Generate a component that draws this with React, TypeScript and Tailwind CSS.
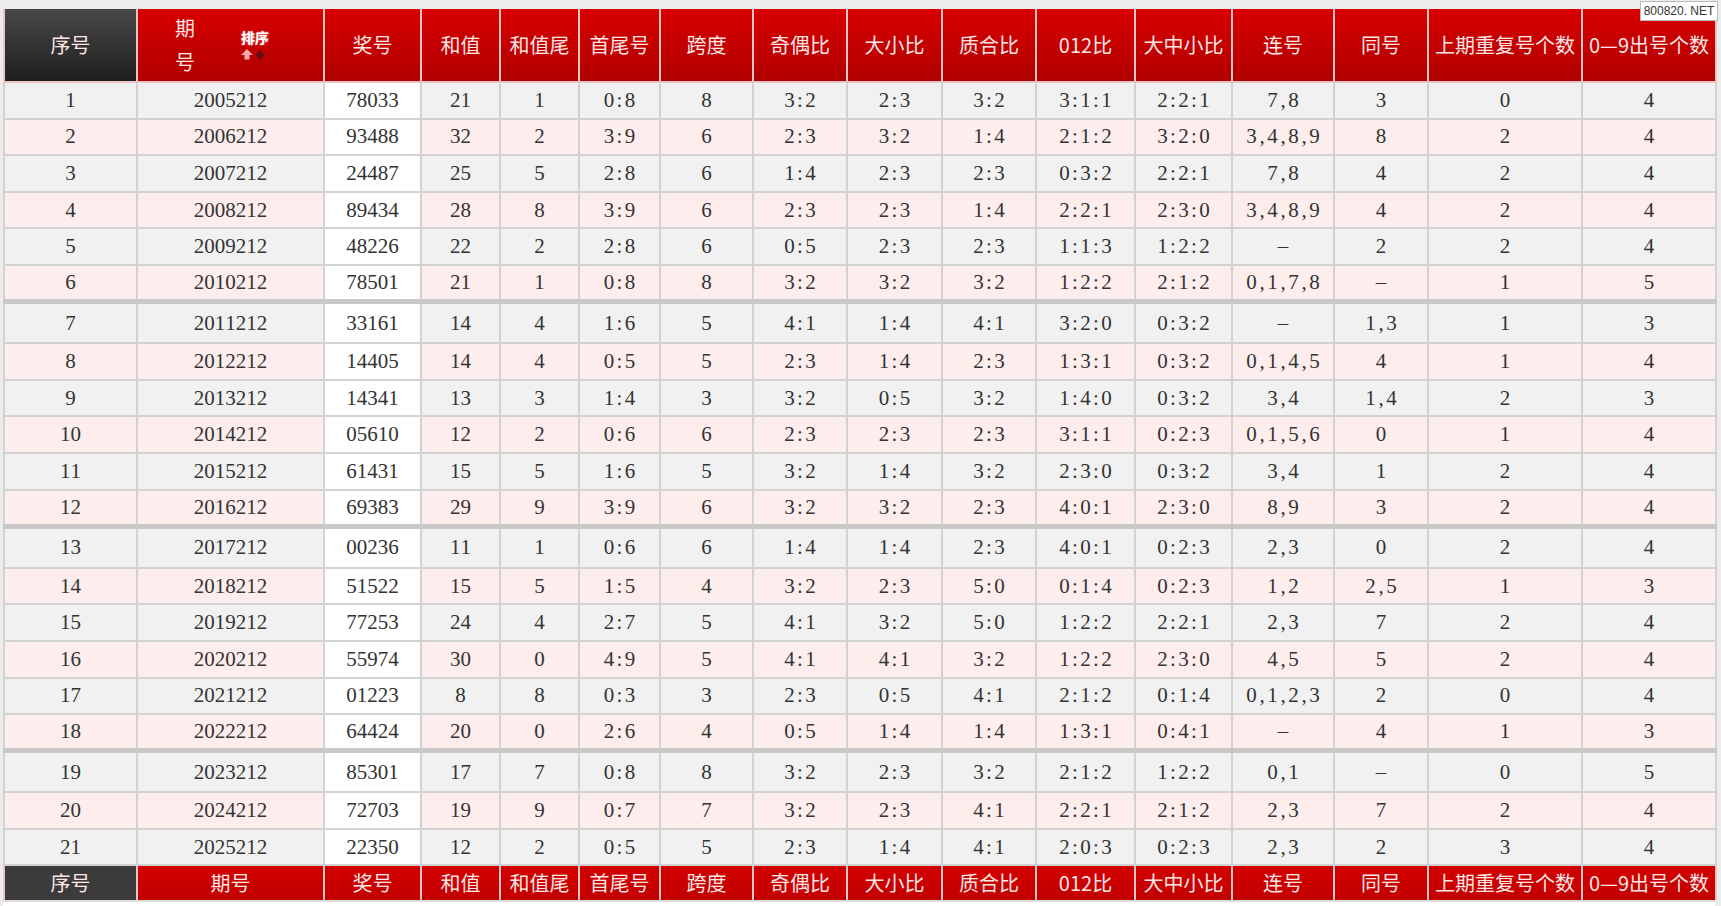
import React from 'react';

type Row = string[];

const widths = [133, 187, 97, 79, 79, 81, 93, 94, 95, 94, 99, 97, 102, 94, 154, 134];

const heads = [
  '序号', '期号', '奖号', '和值', '和值尾', '首尾号', '跨度', '奇偶比', '大小比',
  '质合比', '012比', '大中小比', '连号', '同号', '上期重复号个数', '0—9出号个数',
];

const rows: Row[] = [
  ['1', '2005212', '78033', '21', '1', '0:8', '8', '3:2', '2:3', '3:2', '3:1:1', '2:2:1', '7,8', '3', '0', '4'],
  ['2', '2006212', '93488', '32', '2', '3:9', '6', '2:3', '3:2', '1:4', '2:1:2', '3:2:0', '3,4,8,9', '8', '2', '4'],
  ['3', '2007212', '24487', '25', '5', '2:8', '6', '1:4', '2:3', '2:3', '0:3:2', '2:2:1', '7,8', '4', '2', '4'],
  ['4', '2008212', '89434', '28', '8', '3:9', '6', '2:3', '2:3', '1:4', '2:2:1', '2:3:0', '3,4,8,9', '4', '2', '4'],
  ['5', '2009212', '48226', '22', '2', '2:8', '6', '0:5', '2:3', '2:3', '1:1:3', '1:2:2', '–', '2', '2', '4'],
  ['6', '2010212', '78501', '21', '1', '0:8', '8', '3:2', '3:2', '3:2', '1:2:2', '2:1:2', '0,1,7,8', '–', '1', '5'],
  ['7', '2011212', '33161', '14', '4', '1:6', '5', '4:1', '1:4', '4:1', '3:2:0', '0:3:2', '–', '1,3', '1', '3'],
  ['8', '2012212', '14405', '14', '4', '0:5', '5', '2:3', '1:4', '2:3', '1:3:1', '0:3:2', '0,1,4,5', '4', '1', '4'],
  ['9', '2013212', '14341', '13', '3', '1:4', '3', '3:2', '0:5', '3:2', '1:4:0', '0:3:2', '3,4', '1,4', '2', '3'],
  ['10', '2014212', '05610', '12', '2', '0:6', '6', '2:3', '2:3', '2:3', '3:1:1', '0:2:3', '0,1,5,6', '0', '1', '4'],
  ['11', '2015212', '61431', '15', '5', '1:6', '5', '3:2', '1:4', '3:2', '2:3:0', '0:3:2', '3,4', '1', '2', '4'],
  ['12', '2016212', '69383', '29', '9', '3:9', '6', '3:2', '3:2', '2:3', '4:0:1', '2:3:0', '8,9', '3', '2', '4'],
  ['13', '2017212', '00236', '11', '1', '0:6', '6', '1:4', '1:4', '2:3', '4:0:1', '0:2:3', '2,3', '0', '2', '4'],
  ['14', '2018212', '51522', '15', '5', '1:5', '4', '3:2', '2:3', '5:0', '0:1:4', '0:2:3', '1,2', '2,5', '1', '3'],
  ['15', '2019212', '77253', '24', '4', '2:7', '5', '4:1', '3:2', '5:0', '1:2:2', '2:2:1', '2,3', '7', '2', '4'],
  ['16', '2020212', '55974', '30', '0', '4:9', '5', '4:1', '4:1', '3:2', '1:2:2', '2:3:0', '4,5', '5', '2', '4'],
  ['17', '2021212', '01223', '8', '8', '0:3', '3', '2:3', '0:5', '4:1', '2:1:2', '0:1:4', '0,1,2,3', '2', '0', '4'],
  ['18', '2022212', '64424', '20', '0', '2:6', '4', '0:5', '1:4', '1:4', '1:3:1', '0:4:1', '–', '4', '1', '3'],
  ['19', '2023212', '85301', '17', '7', '0:8', '8', '3:2', '2:3', '3:2', '2:1:2', '1:2:2', '0,1', '–', '0', '5'],
  ['20', '2024212', '72703', '19', '9', '0:7', '7', '3:2', '2:3', '4:1', '2:2:1', '2:1:2', '2,3', '7', '2', '4'],
  ['21', '2025212', '22350', '12', '2', '0:5', '5', '2:3', '1:4', '4:1', '2:0:3', '0:2:3', '2,3', '2', '3', '4'],
];

// every character gets the same half-em box, like the old song-style font
function Mono({ text }: { text: string }) {
  return (
    <span className="inline-flex justify-center">
      {[...text].map((c, i) => (
        <span key={i} className="inline-block w-[10.5px] text-center">{c}</span>
      ))}
    </span>
  );
}

function SortIcon() {
  return (
    <div className="flex flex-col items-start">
      <span className="text-[14px] font-bold leading-[15px] text-white [text-shadow:0_0_2px_#f7b0b0]">排序</span>
      <svg width="28" height="11" viewBox="0 0 28 11" className="mt-[4px]">
        <path d="M6 0 L12 6 L8.5 6 L8.5 10.5 L3.5 10.5 L3.5 6 L0 6 Z" fill="#f3a9a9" />
        <path d="M19 1.5 L23.5 6 L19 10.5 L14.5 6 Z" fill="#5b1111" />
      </svg>
    </div>
  );
}

const sans = 'font-["Noto_Sans_CJK_SC","Noto_Sans",sans-serif]';

export default function App() {
  return (
    <div className="relative min-h-screen bg-[#ececec] pl-[3px] pt-[9px]">
      <table className="w-[1712px] table-fixed border-collapse">
        <colgroup>
          {widths.map((w, i) => (
            <col key={i} style={{ width: w }} />
          ))}
        </colgroup>
        <thead>
          <tr>
            {heads.map((h, i) => (
              <th
                key={h}
                className={`h-[73px] border-x-2 border-b-2 border-[#eec4c4] p-0 text-[20px] font-normal text-[#fde6e6] ${sans} ${
                  i === 0
                    ? 'bg-linear-to-b from-[#484848] to-[#1f1f1f] text-[#f2f2f2]'
                    : 'bg-linear-to-b from-[#d80000] to-[#b10000]'
                }`}
              >
                {i === 1 ? (
                  <div className="flex items-center pl-[37px]">
                    <span className="w-[20px] text-left leading-[34px]">期号</span>
                    <div className="ml-[46px]">
                      <SortIcon />
                    </div>
                  </div>
                ) : (
                  <span className="whitespace-nowrap">{h}</span>
                )}
              </th>
            ))}
          </tr>
        </thead>
        <tbody className='font-["Liberation_Serif",serif] text-[21px] text-[#333]'>
          {rows.map((r, ri) => {
            const groupStart = ri === 6 || ri === 12 || ri === 18;
            const bg = ri % 2 === 0 ? 'bg-[#f1f1f1]' : 'bg-[#fdeded]';
            return (
              <tr key={ri} className={bg}>
                {r.map((v, ci) => (
                  <td
                    key={ci}
                    className={`border-2 border-[#d2d2d2] p-0 text-center leading-none ${
                      groupStart ? 'h-[41.6px] border-t-[5px] border-t-[#c8c8c8]' : 'h-[36.6px]'
                    } ${ci === 2 ? 'bg-white' : ''}`}
                  >
                    <Mono text={v} />
                  </td>
                ))}
              </tr>
            );
          })}
        </tbody>
        <tfoot>
          <tr>
            {heads.map((h, i) => (
              <td
                key={h}
                className={`h-[35px] border-x-2 border-t-2 border-[#eec4c4] p-0 text-center text-[20px] text-[#fde6e6] ${sans} ${
                  i === 0 ? 'bg-[#3b3b3b] text-[#f2f2f2]' : 'bg-linear-to-b from-[#d30000] to-[#c20000]'
                }`}
              >
                <span className="whitespace-nowrap">{h}</span>
              </td>
            ))}
          </tr>
        </tfoot>
      </table>
      <div className="h-[10px] w-[1712px] border-t-2 border-[#dcdcdc] bg-white" />

      <div className='absolute right-[3px] top-[1px] flex h-[20px] w-[78px] items-center justify-center whitespace-nowrap border border-[#b9b9b9] bg-white font-["Liberation_Sans",sans-serif] text-[12px] text-[#333]'>
        800820. NET
      </div>
    </div>
  );
}
